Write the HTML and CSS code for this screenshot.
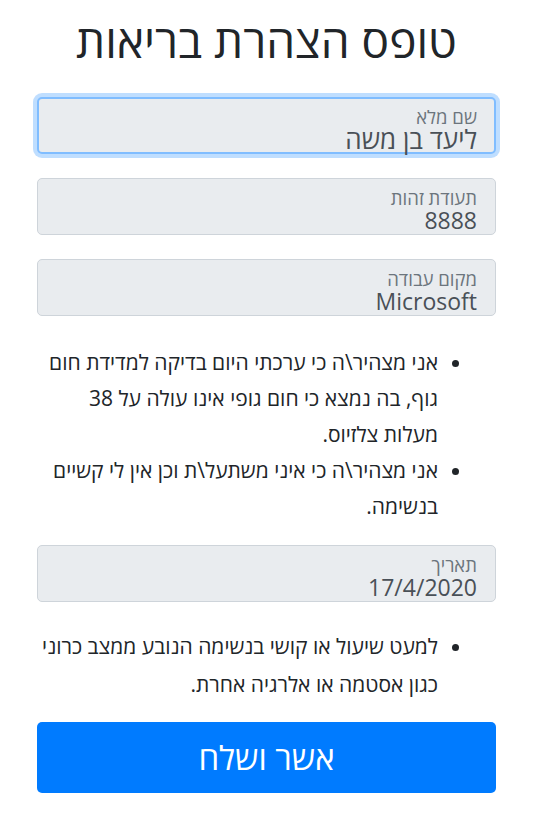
FILE: index.html
```html
<!DOCTYPE html>
<html lang="he" dir="rtl">
<head>
<meta charset="utf-8">
<title>טופס הצהרת בריאות</title>
<link rel="stylesheet" href="styles.css">
</head>
<body>
<div class="page">
  <h1 class="title">טופס הצהרת בריאות</h1>
  <div class="field focused">
    <span class="label">שם מלא</span>
    <span class="value he">ליעד בן משה</span>
  </div>
  <div class="field">
    <span class="label">תעודת זהות</span>
    <span class="value">8888</span>
  </div>
  <div class="field">
    <span class="label">מקום עבודה</span>
    <span class="value">Microsoft</span>
  </div>
  <ul class="decl">
    <li>אני מצהיר\ה כי ערכתי היום בדיקה למדידת חום<br>גוף, בה נמצא כי חום גופי אינו עולה על 38<br>מעלות צלזיוס.</li>
    <li>אני מצהיר\ה כי איני משתעל\ת וכן אין לי קשיים<br>בנשימה.</li>
  </ul>
  <div class="field date">
    <span class="label">תאריך</span>
    <span class="value">17/4/2020</span>
  </div>
  <ul class="decl second">
    <li>למעט שיעול או קושי בנשימה הנובע ממצב כרוני<br>כגון אסטמה או אלרגיה אחרת.</li>
  </ul>
  <button class="submit" type="button">אשר ושלח</button>
</div>
</body>
</html>
```

FILE: styles.css
```css
* { box-sizing: border-box; }
html, body {
  margin: 0;
  padding: 0;
  background: #ffffff;
}
body {
  font-family: "Open Sans", "DejaVu Sans", sans-serif;
  color: #212529;
  direction: rtl;
}
.page {
  padding: 14px 43px 0 37px;
  display: flex;
  flex-direction: column;
}
.title {
  margin: 0 0 31px 0;
  font-size: 46px;
  font-weight: 400;
  line-height: 52px;
  text-align: center;
  color: #212529;
}
.field {
  height: 57px;
  background: #e9ecef;
  border: 1px solid #ced4da;
  border-radius: 5px;
  padding: 9px 18px 0 18px;
  display: flex;
  flex-direction: column;
  align-items: flex-start;
  margin-bottom: 24px;
}
.field.focused {
  border-color: #80bdff;
  border-width: 2px;
  padding: 8px 17px 0 17px;
  box-shadow: 0 0 0 4px rgba(0, 123, 255, 0.25);
}
.label {
  font-size: 18.5px;
  line-height: 20px;
  color: #6c757d;
  white-space: nowrap;
}
.value {
  font-size: 23px;
  line-height: 24px;
  color: #495057;
  white-space: nowrap;
}
.value.he {
  font-size: 26px;
}
.decl {
  margin: 4px 0 21px 0;
  padding: 0 58px 0 0;
  font-size: 21px;
  line-height: 36px;
  color: #212529;
}
.decl li { padding: 0; }
.decl.second {
  margin: 1px 0 19px 0;
  line-height: 38px;
}
.field.date { margin-bottom: 24px; }
.submit {
  height: 71px;
  width: 100%;
  border: none;
  border-radius: 5px;
  background: #007bff;
  color: #ffffff;
  font-family: "Open Sans", "DejaVu Sans", sans-serif;
  font-size: 33px;
  line-height: 40px;
  padding: 0;
}
```
